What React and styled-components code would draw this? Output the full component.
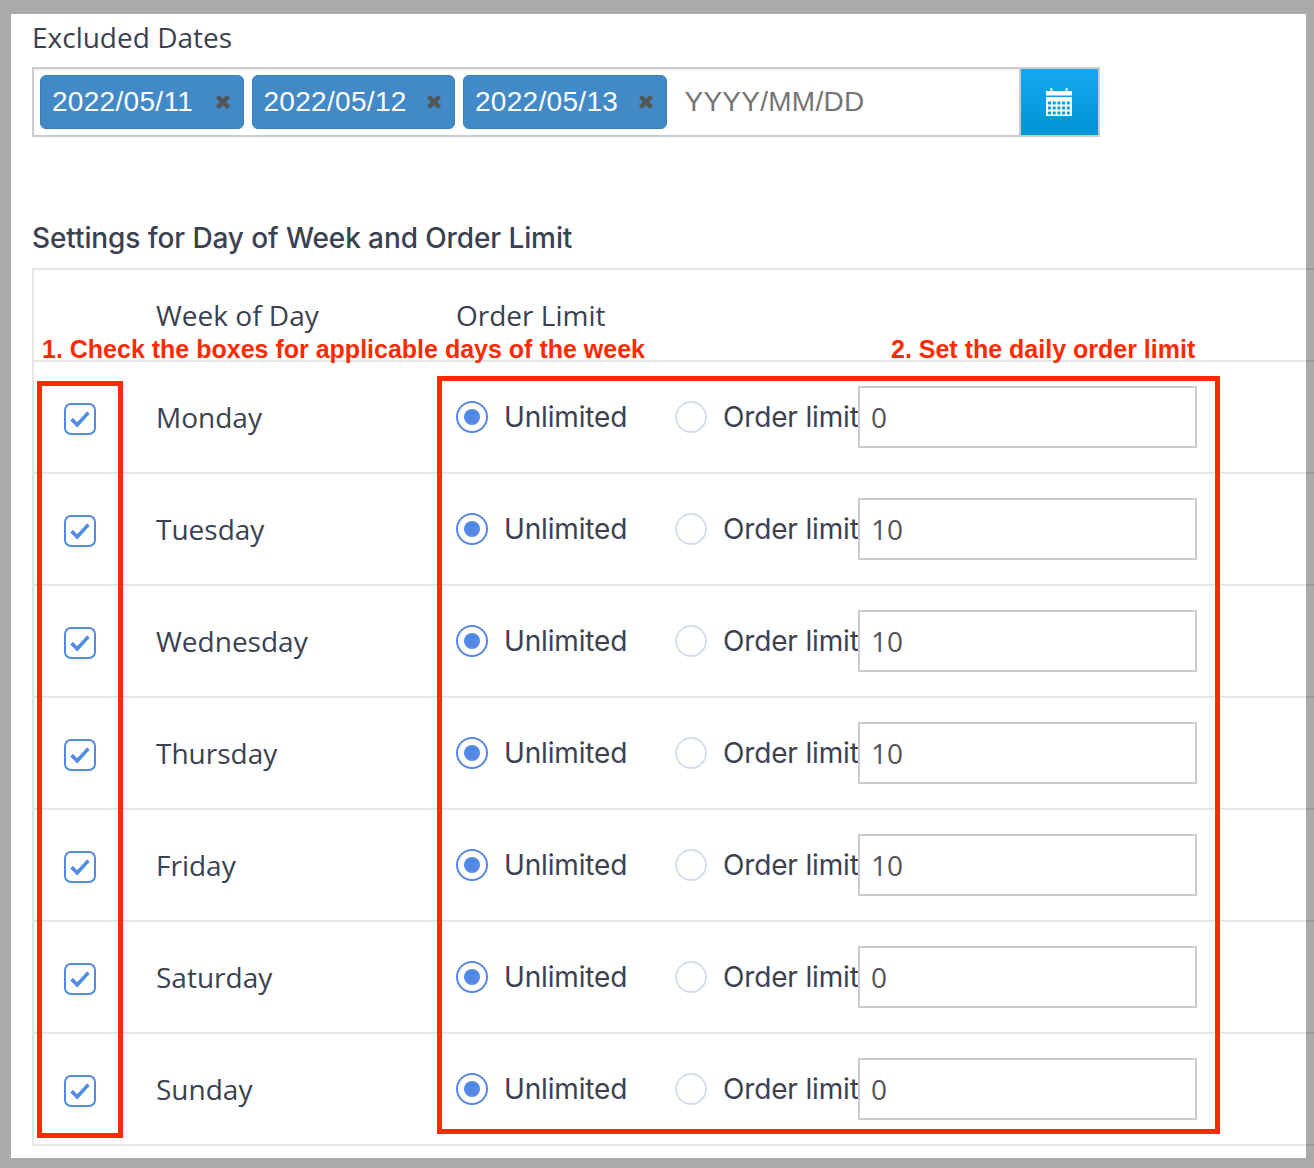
import React from 'react';
import styled, { createGlobalStyle } from 'styled-components';

const days = [
  { name: 'Monday', limit: '0' },
  { name: 'Tuesday', limit: '10' },
  { name: 'Wednesday', limit: '10' },
  { name: 'Thursday', limit: '10' },
  { name: 'Friday', limit: '10' },
  { name: 'Saturday', limit: '0' },
  { name: 'Sunday', limit: '0' },
];

const excluded = ['2022/05/11', '2022/05/12', '2022/05/13'];

const GlobalStyle = createGlobalStyle`
  html, body {
    margin: 0;
    padding: 0;
    background: #aaaaaa;
  }
`;

const Page = styled.div`
  position: relative;
  width: 1314px;
  height: 1168px;
  overflow: hidden;
  background: #aaaaaa;
  padding: 14px 8px 10px 11px;
  box-sizing: border-box;
  font-family: 'Open Sans', sans-serif;
  color: #3a4150;
`;

const Panel = styled.div`
  height: 1144px;
  background: #fff;
  padding-left: 21px;
  box-sizing: border-box;
`;

const FieldLabel = styled.div`
  font-size: 28px;
  line-height: 38px;
  padding: 4px 0 11px;
`;

const DateField = styled.div`
  display: flex;
  width: 1068px;
  height: 70px;
  box-sizing: border-box;
  border: 2px solid #cccccc;
  background: #fff;
  box-shadow: inset 0 2px 2px rgba(0, 0, 0, 0.05);
`;

const Chips = styled.div`
  display: flex;
  flex: 1;
  min-width: 0;
  align-items: center;
  gap: 8px;
  padding-left: 6px;
`;

const Chip = styled.div`
  display: flex;
  flex: none;
  align-items: center;
  width: 203.5px;
  height: 54px;
  box-sizing: border-box;
  padding: 0 12px 0 11px;
  justify-content: space-between;
  background: #4189c7;
  border: 1px solid #3b80bb;
  border-radius: 6px;
  color: #fff;
  font-family: 'Liberation Sans', Arial, sans-serif;
  font-size: 28px;
  letter-spacing: 0.3px;
`;

const DateInput = styled.input`
  flex: 1;
  min-width: 0;
  border: 0;
  outline: 0;
  background: transparent;
  padding: 0 0 0 10px;
  font-family: 'Liberation Sans', Arial, sans-serif;
  font-size: 28px;
  letter-spacing: 0.25px;
  &::placeholder {
    color: #757575;
    opacity: 1;
  }
`;

const CalendarButton = styled.button`
  display: flex;
  flex: none;
  align-items: center;
  justify-content: center;
  width: 79px;
  padding: 0 1px 0 0;
  border: 0;
  border-left: 2px solid #cccccc;
  background: linear-gradient(#15a8f1, #0093d4);
`;

const SectionTitle = styled.div`
  font-family: Inter, sans-serif;
  font-size: 28px;
  font-weight: 500;
  letter-spacing: -0.1px;
  line-height: 38px;
  padding: 82px 0 11px;
`;

const Table = styled.div`
  width: 1320px;
  box-sizing: border-box;
  border-top: 2px solid rgba(0, 0, 0, 0.1);
  border-left: 2px solid rgba(0, 0, 0, 0.1);
`;

const Grid = styled.div`
  display: grid;
  grid-template-columns: 122px 300px 1fr;
  align-items: center;
  border-bottom: 2px solid rgba(0, 0, 0, 0.1);
`;

const HeadRow = styled(Grid)`
  height: 92px;
  box-sizing: border-box;
  align-items: start;
  padding-top: 26px;
  font-size: 28px;
  line-height: 38px;
`;

const Row = styled(Grid)`
  height: 112px;
  box-sizing: border-box;
  font-size: 28px;
`;

const CheckCell = styled.div`
  display: flex;
  padding: 4px 0 0 30px;
`;

const CheckBox = styled.span`
  display: flex;
  align-items: center;
  justify-content: center;
  width: 32px;
  height: 32px;
  box-sizing: border-box;
  border: 2px solid #5289e6;
  border-radius: 7px;
`;

const LimitCell = styled.div`
  display: flex;
  align-items: center;
`;

const RadioLabel = styled.span`
  display: flex;
  align-items: center;
  gap: 16px;
  width: ${(p) => p.$width}px;
  flex: none;
  font-family: Inter, sans-serif;
  font-size: 28px;
  letter-spacing: -0.15px;
  white-space: nowrap;
`;

const Radio = styled.span`
  display: flex;
  align-items: center;
  justify-content: center;
  flex: none;
  width: 32px;
  height: 32px;
  box-sizing: border-box;
  border-radius: 50%;
  border: 2px solid ${(p) => (p.$on ? '#5289e6' : '#d3deea')};
  &::after {
    content: '';
    display: ${(p) => (p.$on ? 'block' : 'none')};
    width: 16px;
    height: 16px;
    border-radius: 50%;
    background: #5289e6;
  }
`;

const LimitInput = styled.input`
  width: 339px;
  height: 62px;
  box-sizing: border-box;
  border: 2px solid #cccccc;
  outline: 0;
  padding: 0 0 0 11px;
  font-family: 'Open Sans', sans-serif;
  font-size: 28px;
  color: #555;
`;

const Note = styled.div`
  position: absolute;
  left: ${(p) => p.$x}px;
  top: 334px;
  font-family: 'Liberation Sans', Arial, sans-serif;
  font-weight: 700;
  font-size: 25px;
  line-height: 30px;
  color: #ff2a00;
  white-space: nowrap;
`;

const Callout = styled.div`
  position: absolute;
  left: ${(p) => p.$x}px;
  top: ${(p) => p.$y}px;
  width: ${(p) => p.$w}px;
  height: ${(p) => p.$h}px;
  box-sizing: border-box;
  border: 5px solid #ff2a00;
`;

const CloseIcon = () => (
  <svg width="16" height="16" viewBox="0 0 16 16">
    <path d="M2.5 2.5l11 11M13.5 2.5l-11 11" stroke="#555" strokeWidth="4.4" fill="none" />
  </svg>
);

// five columns, three rows of small squares cut out of the calendar body
const calendarDots = [13.5, 18.5, 23.5]
  .flatMap((y) => [2, 6.7, 11.4, 16.1, 20.8].map((x) => `M${x} ${y}v3h3v-3z`))
  .join('');

const CalendarIcon = () => (
  <svg width="26" height="28" viewBox="0 0 26 28">
    <path d="M0 3h4.5V0h1.8v3h13.4V0h1.8v3H26v4.5H0z" fill="#fff" />
    <path fillRule="evenodd" fill="#fff" d={`M0 9h26v19H0z${calendarDots}`} />
  </svg>
);

const CheckIcon = () => (
  <svg width="20" height="18" viewBox="0 0 20 18">
    <path d="M1.6 9.2l5.6 5.6L18.4 2.6" stroke="#5289e6" strokeWidth="3.6" fill="none" />
  </svg>
);

export default function App() {
  return (
    <Page>
      <GlobalStyle />
      <Panel>
        <FieldLabel>Excluded Dates</FieldLabel>
        <DateField>
          <Chips>
            {excluded.map((date) => (
              <Chip key={date}>
                {date}
                <CloseIcon />
              </Chip>
            ))}
            <DateInput placeholder="YYYY/MM/DD" readOnly />
          </Chips>
          <CalendarButton>
            <CalendarIcon />
          </CalendarButton>
        </DateField>

        <SectionTitle>Settings for Day of Week and Order Limit</SectionTitle>
        <Table>
          <HeadRow>
            <span />
            <span>Week of Day</span>
            <LimitCell>Order Limit</LimitCell>
          </HeadRow>
          {days.map((day) => (
            <Row key={day.name}>
              <CheckCell>
                <CheckBox>
                  <CheckIcon />
                </CheckBox>
              </CheckCell>
              <div>{day.name}</div>
              <LimitCell>
                <RadioLabel $width={219}>
                  <Radio $on />
                  Unlimited
                </RadioLabel>
                <RadioLabel $width={183}>
                  <Radio />
                  Order limit
                </RadioLabel>
                <LimitInput defaultValue={day.limit} readOnly />
              </LimitCell>
            </Row>
          ))}
        </Table>
      </Panel>

      <Note $x={42}>1. Check the boxes for applicable days of the week</Note>
      <Note $x={891}>2. Set the daily order limit</Note>
      <Callout $x={37} $y={381} $w={86} $h={757} />
      <Callout $x={437} $y={376} $w={783} $h={758} />
    </Page>
  );
}
